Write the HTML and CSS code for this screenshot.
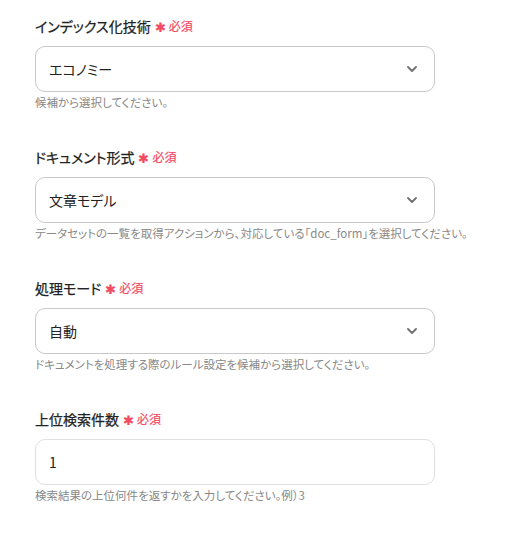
FILE: index.html
```html
<!DOCTYPE html>
<html lang="ja">
<head>
<meta charset="utf-8">
<link rel="stylesheet" href="styles.css">
</head>
<body>
<div class="form">
  <div class="field">
    <div class="label">インデックス化技術<span class="req"><span class="ast">✱</span>必須</span></div>
    <div class="control select"><span class="value">エコノミー</span><svg class="chev" width="10" height="6" viewBox="0 0 10 6"><path d="M1 1 L5 5 L9 1" fill="none" stroke="#707070" stroke-width="1.8" stroke-linecap="round" stroke-linejoin="round"/></svg></div>
    <div class="help">候補から選択してください。</div>
  </div>
  <div class="field">
    <div class="label">ドキュメント形式<span class="req"><span class="ast">✱</span>必須</span></div>
    <div class="control select"><span class="value">文章モデル</span><svg class="chev" width="10" height="6" viewBox="0 0 10 6"><path d="M1 1 L5 5 L9 1" fill="none" stroke="#707070" stroke-width="1.8" stroke-linecap="round" stroke-linejoin="round"/></svg></div>
    <div class="help">データセットの一覧を取得アクションから、対応している「doc_form」を選択してください。</div>
  </div>
  <div class="field">
    <div class="label">処理モード<span class="req"><span class="ast">✱</span>必須</span></div>
    <div class="control select"><span class="value">自動</span><svg class="chev" width="10" height="6" viewBox="0 0 10 6"><path d="M1 1 L5 5 L9 1" fill="none" stroke="#707070" stroke-width="1.8" stroke-linecap="round" stroke-linejoin="round"/></svg></div>
    <div class="help">ドキュメントを処理する際のルール設定を候補から選択してください。</div>
  </div>
  <div class="field">
    <div class="label">上位検索件数<span class="req"><span class="ast">✱</span>必須</span></div>
    <div class="control input"><span class="value">1</span></div>
    <div class="help">検索結果の上位何件を返すかを入力してください。例）3</div>
  </div>
</div>
</body>
</html>
```
FILE: styles.css
```css
html, body {
  margin: 0;
  padding: 0;
  background: #fff;
}
body {
  font-family: "Noto Sans CJK JP", "Noto Sans", sans-serif;
  font-feature-settings: "palt";
  color: #333;
}
.form {
  display: flex;
  flex-direction: column;
  gap: 37px;
  padding: 16px 0 0 35px;
  width: 400px;
}
.field {
  display: flex;
  flex-direction: column;
}
.label {
  font-size: 14px;
  line-height: 20px;
  font-weight: 400;
  color: #222;
  display: flex;
  align-items: center;
  height: 20px;
  -webkit-text-stroke: 0.25px #222;
}
.req {
  color: #f24a63;
  font-size: 12px;
  font-weight: 400;
  margin-left: 4px;
  display: inline-flex;
  align-items: center;
  -webkit-text-stroke: 0.2px #f24a63;
}
.ast {
  font-size: 13px;
  margin-right: 3px;
  position: relative;
  top: 1px;
}
.control {
  margin-top: 10px;
  height: 46px;
  box-sizing: border-box;
  border: 1px solid #c9c9c9;
  border-radius: 10px;
  display: flex;
  align-items: center;
  justify-content: space-between;
  padding: 0 17px 0 13px;
  font-size: 14px;
  color: #222;
}
.control.input {
  border-color: #e0e0e0;
}
.value {
  line-height: 20px;
}
.chev {
  display: block;
}
.help {
  margin-top: 2px;
  font-size: 11.5px;
  line-height: 16px;
  color: #888;
  white-space: nowrap;
}
```
